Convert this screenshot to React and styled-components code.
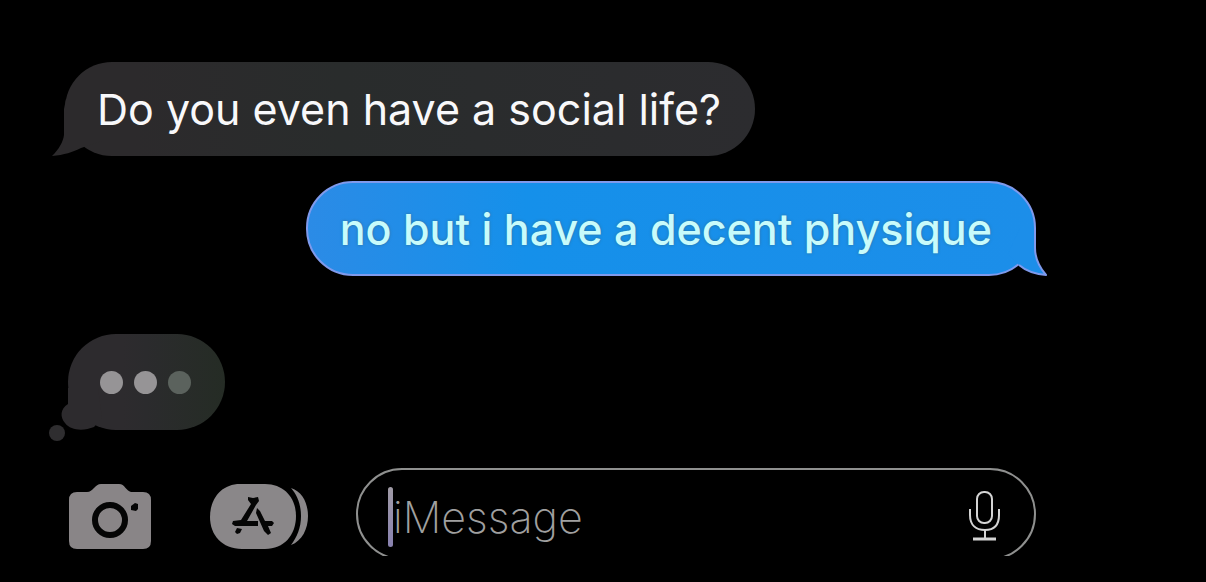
import React from "react";
import styled, { createGlobalStyle, css } from "styled-components";

export default function App() {
  return (
    <>
      <GlobalStyle />
      <Screen>
        <Thread>
          <Bubble>
            Do you even have a social life?
            <IncomingTail />
          </Bubble>
          <Bubble $mine>
            no but i have a decent physique
            <OutgoingTail />
          </Bubble>
          <Typing aria-label="Typing">
            <Dot />
            <Dot />
            <Dot $dim />
            <TypingTail />
          </Typing>
        </Thread>
        <Composer>
          <IconButton type="button" aria-label="Camera">
            <CameraIcon />
          </IconButton>
          <IconButton type="button" aria-label="Apps">
            <AppsIcon />
          </IconButton>
          <Field>
            <Caret />
            <Input type="text" placeholder="iMessage" aria-label="iMessage" />
            <IconButton type="button" aria-label="Dictate">
              <MicIcon />
            </IconButton>
          </Field>
        </Composer>
      </Screen>
    </>
  );
}

const IncomingTail = () => (
  <Tail $left="-13px" $bottom="-1px" width="64" height="64" aria-hidden="true">
    <path
      d="M14 6 L12 16 L12 42 C11 49 7 56 0 63 C12 62 21 59 29 55 L50 48 L50 6 Z"
      fill="#2c2a2c"
    />
  </Tail>
);

const OutgoingTail = () => (
  <Tail $right="-14px" $bottom="-4px" width="64" height="54" aria-hidden="true">
    <path
      d="M36 4 L51 4 L51 24 C51 36 56 44 62 51 C50 50 42 47 35 41 L24 30 Z"
      fill="#1c8ee9"
    />
    <path
      d="M51 4 L51 24 C51 36 56 44 62 51 C50 50 42 47 35 41"
      fill="none"
      stroke="#7f9aec"
      strokeWidth="2"
      strokeLinejoin="round"
    />
  </Tail>
);

const TypingTail = () => (
  <Tail $left="-20px" $bottom="-12px" width="60" height="54" aria-hidden="true">
    <path
      d="M20 0 L20 16 C12 21 12 29 17 35 C23 43 36 43 46 39 L54 30 L50 0 Z"
      fill="#2d2b2e"
    />
    <circle cx="9" cy="45" r="8" fill="#2f2e30" />
  </Tail>
);

const CameraIcon = () => (
  <svg width="82" height="66" viewBox="0 0 82 66" aria-hidden="true">
    <path
      d="M8 8 H18 C24 8 26 0 32 0 H50 C56 0 57 7 62 8 H74 Q82 8 82 16 V57 Q82 65 74 65 H8 Q0 65 0 57 V16 Q0 8 8 8 Z"
      fill="#898587"
    />
    <ellipse
      cx="41"
      cy="36"
      rx="15"
      ry="15"
      fill="none"
      stroke="#050505"
      strokeWidth="6"
    />
    <path d="M62 22 L66 19 L69 20 L69 25 L67 27 L62 26 Z" fill="#050505" />
  </svg>
);

const AppsIcon = () => (
  <svg width="99" height="66" viewBox="0 0 99 66" aria-hidden="true">
    <path
      d="M30 0 H55 C75 0 86 15 86 32 C86 51 74 65 55 65 H32 C12 65 0 51 0 33 C0 14 12 0 30 0 Z"
      fill="#8a8789"
    />
    <path
      d="M81 4 C93 8 98 20 98 32 C98 45 92 57 81 61 C87 53 91 44 91 32 C91 20 87 11 81 4 Z"
      fill="#8a8789"
    />
    <g fill="#050505">
      <path d="M38 13 L43 14 L48 13 L49 17 L46 21 L37 37 L48 37 L48 42 L25 42 L22 40 L23 37 L31 36 L41 20 L38 16 Z" />
      <path d="M47 24 L50 27 L55 37 L62 37 L64 39 L62 42 L58 42 L61 49 L58 51 L54 47 L46 29 Z" />
      <path d="M27 44 L32 45 L30 49 L27 50 L25 48 Z" />
    </g>
  </svg>
);

const MicIcon = () => (
  <svg width="34" height="52" viewBox="0 0 34 52" aria-hidden="true">
    <g fill="none" stroke="#d4d4d4" strokeWidth="2">
      <rect x="9" y="1" width="15" height="31" rx="7" />
      <path d="M2 18 V24 C2 34 8 39 17 39 C26 39 31 34 31 24 V18" />
      <path d="M17 39 V48" />
      <path d="M5 48 H28" strokeWidth="3" />
    </g>
  </svg>
);

const GlobalStyle = createGlobalStyle`
  * {
    box-sizing: border-box;
  }
  body {
    margin: 0;
    background: #000;
    font-family: Inter, "Liberation Sans", sans-serif;
  }
`;

const Screen = styled.main`
  padding: 62px 170px 10px 65px;
`;

const Thread = styled.section`
  display: flex;
  flex-direction: column;
  align-items: flex-start;
`;

const Bubble = styled.div`
  position: relative;
  isolation: isolate;
  padding: 19px 34px 19px 32px;
  border-radius: 47px;
  background: linear-gradient(
    90deg,
    #2c2a2c 0%,
    #2c2a2c 10%,
    #292c2c 40%,
    #2c2c2f 100%
  );
  color: #f8f8fa;
  font-size: 43px;
  line-height: 56px;

  ${(props) =>
    props.$mine &&
    css`
      align-self: flex-end;
      margin-top: 25px;
      padding: 18px 42px 17px 32px;
      border: 2px solid #7f9aec;
      background: linear-gradient(90deg, #2b8be6 0%, #1590ea 30%, #1c8ee9 100%);
      color: #c8fbfb;
      font-weight: 500;
      text-shadow: 0 0 3px #2e6f96;
    `}
`;

/* sits above the bubble's fill but below its text */
const Tail = styled.svg`
  position: absolute;
  z-index: -1;
  left: ${(props) => props.$left || "auto"};
  right: ${(props) => props.$right || "auto"};
  bottom: ${(props) => props.$bottom};
`;

const Typing = styled.div`
  position: relative;
  isolation: isolate;
  display: flex;
  align-items: center;
  gap: 11px;
  margin-top: 58px;
  margin-left: 3px;
  padding: 37px 34px 36px 32px;
  border-radius: 48px;
  background: linear-gradient(
    90deg,
    #2d2b2e 0%,
    #2d2b2e 35%,
    #2b2b2d 50%,
    #252c25 100%
  );
`;

const Dot = styled.span`
  width: 23px;
  height: 23px;
  border-radius: 50%;
  background: ${(props) => (props.$dim ? "#5b625d" : "#969496")};
`;

const Composer = styled.form`
  display: flex;
  align-items: center;
  margin-top: 38px;
  padding-left: 4px;
`;

const IconButton = styled.button`
  display: flex;
  flex: none;
  margin: 0;
  padding: 0;
  border: 0;
  background: none;
  cursor: pointer;

  & + & {
    margin-left: 59px;
  }
`;

const Field = styled.div`
  position: relative;
  display: flex;
  flex: 1;
  align-items: center;
  min-width: 0;
  height: 98px;
  margin-left: 47px;
  padding: 0 34px 0 32px;

  /* outline is open along the bottom edge */
  &::before {
    content: "";
    position: absolute;
    inset: 0 0 6px;
    border: 2px solid #8f908f;
    border-radius: 46px;
    clip-path: inset(0 0 4px 0);
    pointer-events: none;
  }
`;

const Caret = styled.span`
  flex: none;
  width: 5px;
  height: 60px;
  border-radius: 3px;
  background: linear-gradient(#a09ba6, #8982b0);
`;

const Input = styled.input`
  flex: 1;
  min-width: 0;
  padding: 0;
  border: 0;
  outline: 0;
  background: none;
  color: #ddd;
  font: 200 43px/56px Inter, "Liberation Sans", sans-serif;

  &::placeholder {
    color: #a0a0a0;
    opacity: 1;
  }
`;
